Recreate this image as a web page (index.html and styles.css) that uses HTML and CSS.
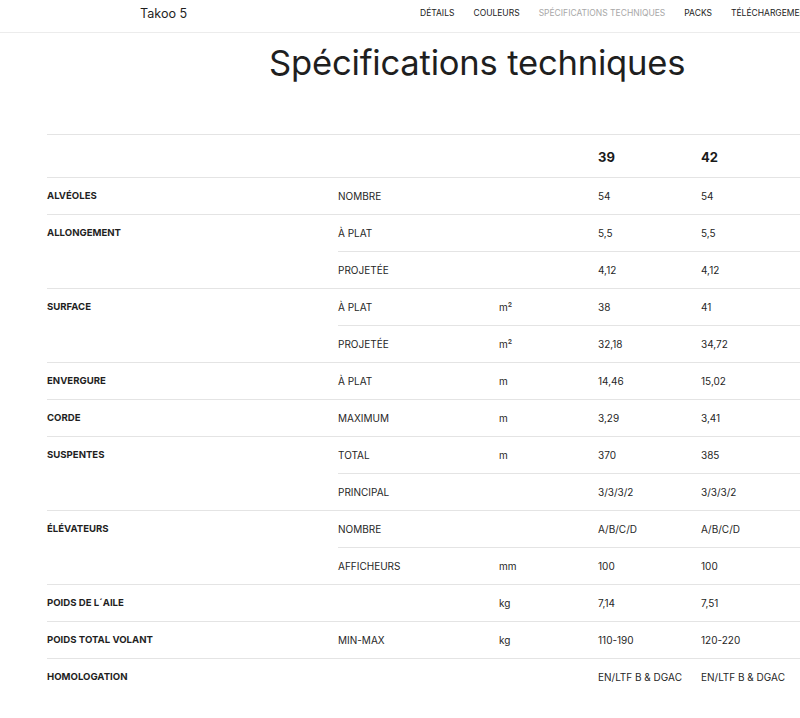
FILE: index.html
```html
<!DOCTYPE html>
<html lang="fr">
<head>
<meta charset="utf-8">
<title>Takoo 5 – Spécifications techniques</title>
<link rel="stylesheet" href="styles.css">
</head>
<body>
<header class="topbar">
  <div class="brand">Takoo 5</div>
  <nav class="nav">
    <a class="nav-item">DÉTAILS</a>
    <a class="nav-item">COULEURS</a>
    <a class="nav-item active">SPÉCIFICATIONS TECHNIQUES</a>
    <a class="nav-item">PACKS</a>
    <a class="nav-item">TÉLÉCHARGEMENTS</a>
  </nav>
</header>
<main class="content">
  <h1 class="title">Spécifications techniques</h1>
  <table class="specs">
    <colgroup>
      <col class="c-label"><col class="c-sub"><col class="c-unit"><col class="c-size"><col class="c-size-last">
    </colgroup>
    <thead>
      <tr><th></th><th></th><th></th><th class="size">39</th><th class="size">42</th></tr>
    </thead>
    <tbody>
      <tr><td class="label">ALVÉOLES</td><td>NOMBRE</td><td></td><td>54</td><td>54</td></tr>
      <tr><td class="label" rowspan="2">ALLONGEMENT</td><td>À PLAT</td><td></td><td>5,5</td><td>5,5</td></tr>
      <tr><td>PROJETÉE</td><td></td><td>4,12</td><td>4,12</td></tr>
      <tr><td class="label" rowspan="2">SURFACE</td><td>À PLAT</td><td>m²</td><td>38</td><td>41</td></tr>
      <tr><td>PROJETÉE</td><td>m²</td><td>32,18</td><td>34,72</td></tr>
      <tr><td class="label">ENVERGURE</td><td>À PLAT</td><td>m</td><td>14,46</td><td>15,02</td></tr>
      <tr><td class="label">CORDE</td><td>MAXIMUM</td><td>m</td><td>3,29</td><td>3,41</td></tr>
      <tr><td class="label" rowspan="2">SUSPENTES</td><td>TOTAL</td><td>m</td><td>370</td><td>385</td></tr>
      <tr><td>PRINCIPAL</td><td></td><td>3/3/3/2</td><td>3/3/3/2</td></tr>
      <tr><td class="label" rowspan="2">ÉLÉVATEURS</td><td>NOMBRE</td><td></td><td>A/B/C/D</td><td>A/B/C/D</td></tr>
      <tr><td>AFFICHEURS</td><td>mm</td><td>100</td><td>100</td></tr>
      <tr><td class="label">POIDS DE L´AILE</td><td></td><td>kg</td><td>7,14</td><td>7,51</td></tr>
      <tr><td class="label">POIDS TOTAL VOLANT</td><td>MIN-MAX</td><td>kg</td><td>110-190</td><td>120-220</td></tr>
      <tr><td class="label">HOMOLOGATION</td><td></td><td></td><td>EN/LTF B &amp; DGAC</td><td>EN/LTF B &amp; DGAC</td></tr>
    </tbody>
  </table>
</main>
</body>
</html>
```

FILE: styles.css
```css
html, body {
  margin: 0;
  padding: 0;
  overflow: hidden;
  background: #fff;
}
body {
  width: 900px;
  font-family: Inter, "Noto Sans", sans-serif;
  color: #1f1f1f;
}
.topbar {
  display: flex;
  align-items: center;
  height: 33px;
  border-bottom: 1px solid #ececec;
  padding-left: 140px;
  box-sizing: border-box;
}
.brand {
  font-size: 12.6px;
  width: 280px;
  margin-top: -6px;
}
.nav {
  display: flex;
  gap: 19px;
  margin-top: -6px;
  white-space: nowrap;
}
.nav-item {
  font-size: 8.5px;
  color: #222;
  text-decoration: none;
}
.nav-item.active {
  color: #a8a8a8;
}
.content {
  padding-left: 47px;
}
.title {
  font-weight: 400;
  font-size: 34.6px;
  letter-spacing: -0.2px;
  margin: 0;
  padding: 8px 0 0 222px;
  height: 101px;
  box-sizing: border-box;
}
.specs {
  border-collapse: collapse;
  table-layout: fixed;
  width: 760px;
}
.c-label { width: 291px; }
.c-sub { width: 161px; }
.c-unit { width: 99px; }
.c-size { width: 103px; }
.c-size-last { width: 106px; }
.specs th, .specs td {
  text-align: left;
  padding: 0;
  border-top: 1px solid #e4e4e4;
  font-size: 10px;
  line-height: 12px;
  height: 36px;
  vertical-align: middle;
  white-space: nowrap;
  color: #262626;
}
.specs thead th {
  height: 42px;
}
.specs th.size {
  font-size: 13px;
  font-weight: 700;
  padding-top: 2px;
  height: 40px;
  color: #1a1a1a;
}
.specs td.label {
  font-weight: 700;
  vertical-align: top;
  padding-top: 12px;
  height: 24px;
  font-size: 9.6px;
  color: #1f1f1f;
}
```
